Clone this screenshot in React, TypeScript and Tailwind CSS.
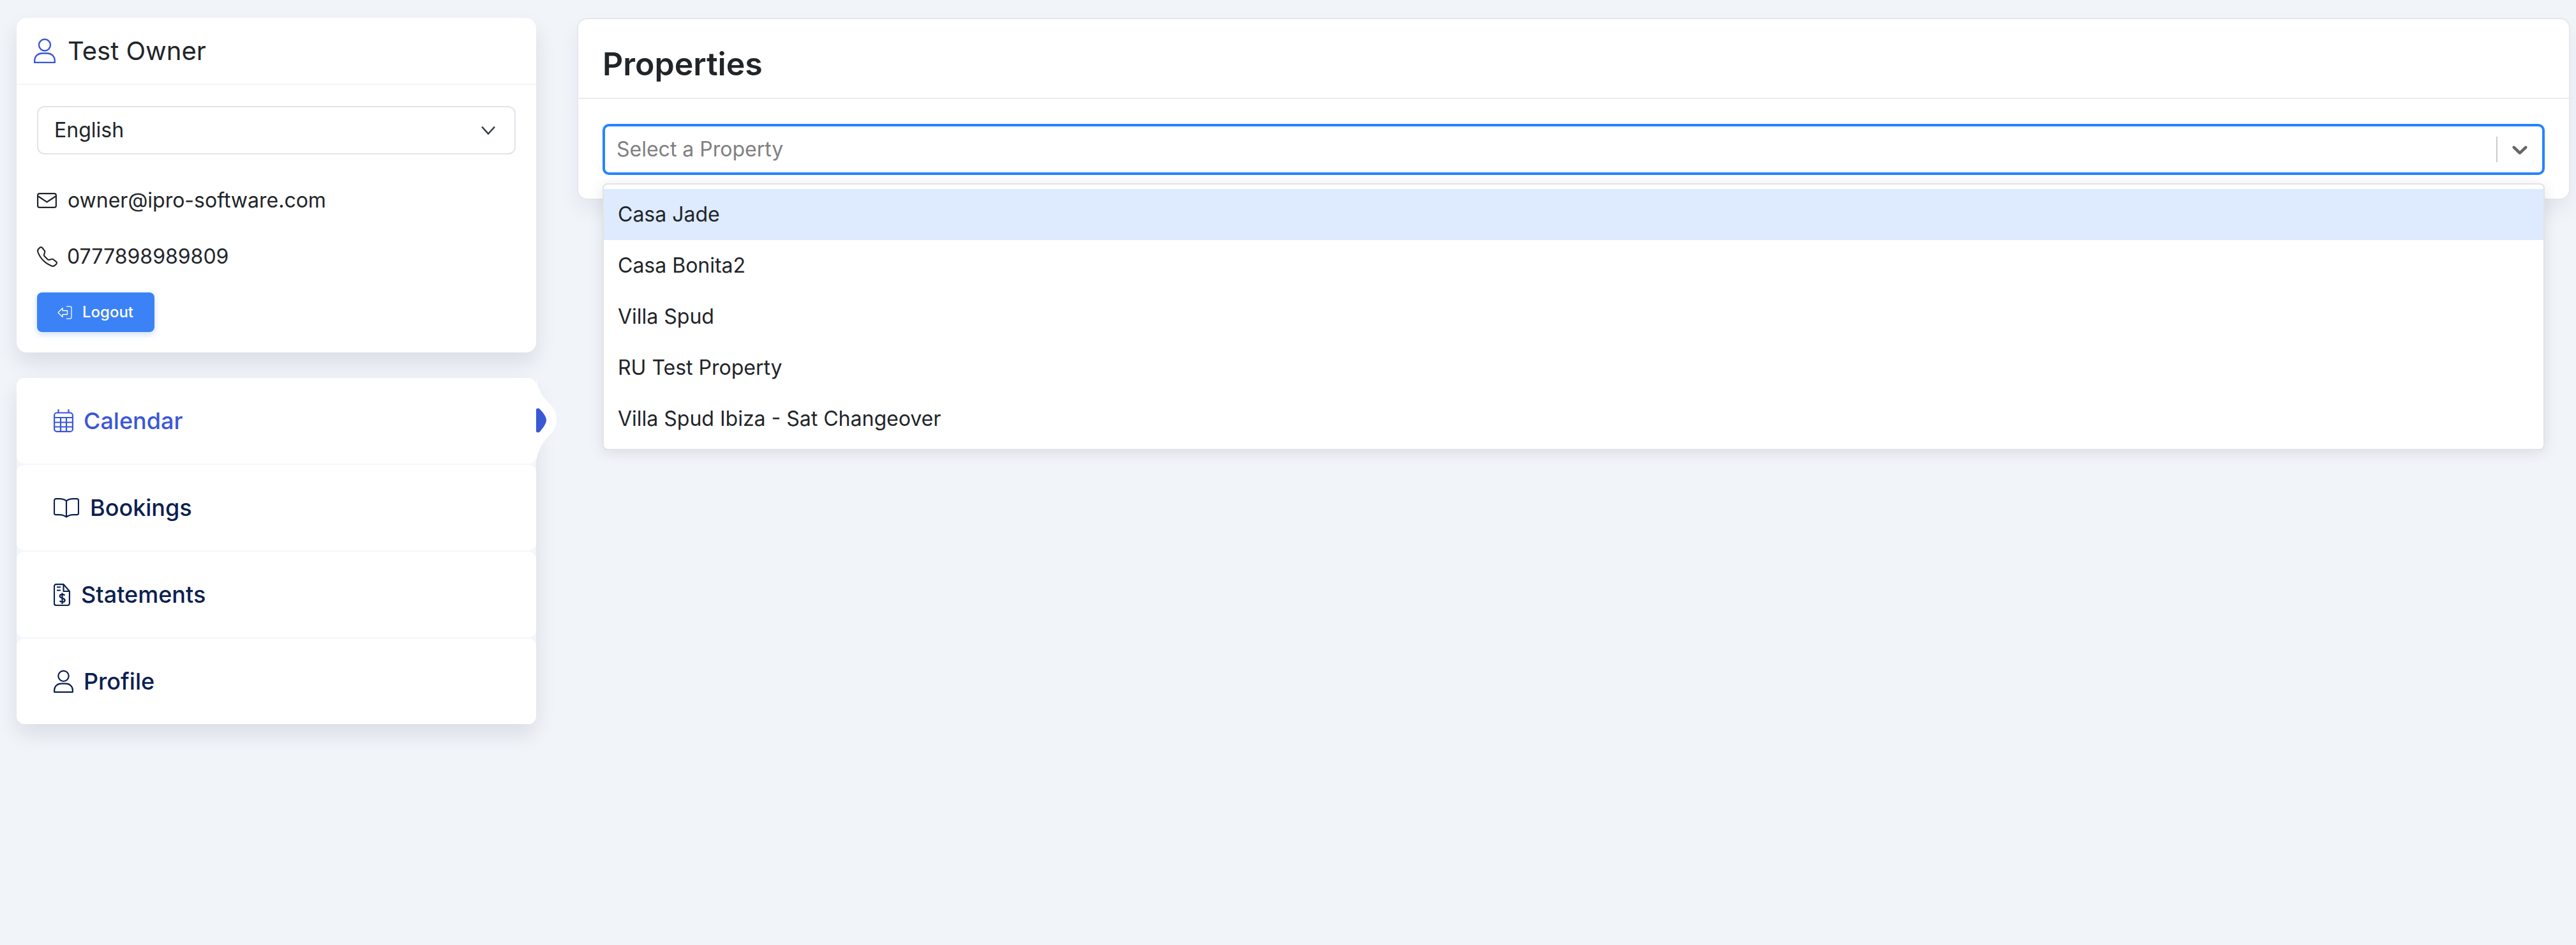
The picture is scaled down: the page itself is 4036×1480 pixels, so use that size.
import React from "react";

const properties = [
  "Casa Jade",
  "Casa Bonita2",
  "Villa Spud",
  "RU Test Property",
  "Villa Spud Ibiza - Sat Changeover",
];

const PersonIcon = ({ className }: { className: string }) => (
  <svg viewBox="0 0 34 39" fill="none" stroke="currentColor" strokeWidth="2.4" className={className}>
    <circle cx="17" cy="10.500" r="9" />
    <path d="M1.200 38v-3c0-7 5.300-11.500 12-11.500h7.600c6.700 0 12 4.500 12 11.500v3z" strokeLinejoin="round" />
  </svg>
);

const MailIcon = () => (
  <svg viewBox="0 0 31 24" fill="none" stroke="currentColor" strokeWidth="2.200" className="w-[31px] h-[24px] shrink-0">
    <rect x="1.100" y="1.100" width="28.800" height="21.800" rx="3" />
    <path d="M2 5.500l13.500 9 13.500-9" />
  </svg>
);

const PhoneIcon = () => (
  <svg viewBox="0 0 16 16" fill="currentColor" className="w-[32px] h-[32px] shrink-0">
    <path d="M3.654 1.328a.678.678 0 0 0-1.015-.063L1.605 2.3c-.483.484-.661 1.169-.45 1.77a17.568 17.568 0 0 0 4.168 6.608 17.569 17.569 0 0 0 6.608 4.168c.601.211 1.286.033 1.77-.45l1.034-1.034a.678.678 0 0 0-.063-1.015l-2.307-1.794a.678.678 0 0 0-.58-.122l-2.19.547a1.745 1.745 0 0 1-1.657-.459L5.482 8.062a1.745 1.745 0 0 1-.46-1.657l.548-2.19a.678.678 0 0 0-.122-.58L3.654 1.328zM1.884.511a1.745 1.745 0 0 1 2.612.163L6.29 2.98c.329.423.445.974.315 1.494l-.547 2.19a.678.678 0 0 0 .178.643l2.457 2.457a.678.678 0 0 0 .644.178l2.189-.547a1.745 1.745 0 0 1 1.494.315l2.306 1.794c.829.645.905 1.870.163 2.611l-1.034 1.034c-.74.74-1.846 1.065-2.877.702a18.634 18.634 0 0 1-7.010-4.420 18.634 18.634 0 0 1-4.420-7.009c-.362-1.030-.037-2.137.703-2.877L1.885.511z" />
  </svg>
);

const LogoutIcon = () => (
  <svg viewBox="0 0 23 21" fill="none" stroke="currentColor" strokeWidth="1.300" strokeLinejoin="round" className="w-[23px] h-[21px] shrink-0">
    <path d="M14 .800h5.500a2.500 2.500 0 0 1 2.500 2.500v14.400a2.500 2.500 0 0 1-2.500 2.500H14" />
    <path d="M1 10.500l7-7v4h7.500v6H8v4z" />
  </svg>
);

const CalendarIcon = () => (
  <svg viewBox="0 0 31 36" fill="none" stroke="currentColor" strokeWidth="2.200" className="w-[31px] h-[36px] shrink-0">
    <rect x="1.100" y="5.500" width="28.800" height="29.400" rx="4" />
    <path d="M7.500 0v6M23.500 0v6M1 13h29M1 20.500h29M1 27.500h29M11 13v22M20 13v22" />
  </svg>
);

const BookIcon = () => (
  <svg viewBox="0 0 40 31" fill="none" stroke="currentColor" strokeWidth="2.200" strokeLinejoin="round" className="w-[40px] h-[31px] shrink-0">
    <path d="M20 4.500C17 2 13 1.100 9 1.100H4a3 3 0 0 0-3 3v20a2 2 0 0 0 2 2h6c4.500 0 8 1.300 11 3.600 3-2.300 6.500-3.600 11-3.600h6a2 2 0 0 0 2-2v-20a3 3 0 0 0-3-3h-5c-4 0-8 .9-11 3.400zM20 4.500v25" />
  </svg>
);

const StatementIcon = () => (
  <svg viewBox="0 0 26 35" fill="none" stroke="currentColor" strokeWidth="2.200" strokeLinejoin="round" className="w-[26px] h-[35px] shrink-0">
    <path d="M4 1.100h11.500L24.900 12v19a3 3 0 0 1-3 3H4a3 3 0 0 1-3-3V4.100a3 3 0 0 1 3-3zM15.500 1.100V12h9.400M5 5.500h6M5 10.500h6" />
    <path d="M17.500 18.500c-.8-1-2.300-1.600-4-1.600-2.200 0-3.800 1.100-3.800 2.900 0 3.700 8 2.400 8 6.200 0 1.800-1.700 2.900-3.900 2.900-1.800 0-3.300-.7-4.300-1.800M13.500 14.500v17.500" />
  </svg>
);

const navItems = [
  { label: "Calendar", icon: <CalendarIcon />, gap: "gap-[16px]", active: true },
  { label: "Bookings", icon: <BookIcon />, gap: "gap-[17px]", active: false },
  { label: "Statements", icon: <StatementIcon />, gap: "gap-[17px]", active: false },
  { label: "Profile", icon: <PersonIcon className="w-[31px] h-[36px] shrink-0" />, gap: "gap-[16px]", active: false },
];

export default function App() {
  return (
    <div className="flex items-start min-h-[1480px] bg-[#f1f4f9] font-['Inter',sans-serif] pt-[28px] pl-[26px] pr-[9px] text-[#212529]">
      {/* Sidebar */}
      <div className="w-[814px] shrink-0 flex flex-col gap-[40px]">
        <div className="bg-white rounded-[16px] shadow-[0_16px_32px_rgba(18,38,63,0.1)]">
          <div className="h-[105px] flex items-center gap-[19px] pl-[27px] border-b-2 border-[#f3f4f6]">
            <PersonIcon className="w-[34px] h-[39px] shrink-0 text-[#3a57d6]" />
            <span className="text-[40px] leading-[48px]">Test Owner</span>
          </div>
          <div className="px-[32px] pt-[33px] pb-[32px]">
            <div className="h-[76px] flex items-center justify-between pl-[25px] pr-[29px] border-2 border-[#e2e4ea] rounded-[12px] text-[32px]">
              English
              <svg viewBox="0 0 24 14" fill="none" stroke="#343a40" strokeWidth="2.500" className="w-[24px] h-[14px]">
                <path d="M2 1.500l10 11 10-11" />
              </svg>
            </div>
            <div className="flex items-center gap-[17px] mt-[52px] h-[40px] text-[32px]">
              <MailIcon />
              owner@ipro-software.com
            </div>
            <div className="flex items-center gap-[15px] mt-[48px] h-[40px] text-[32px]">
              <PhoneIcon />
              0777898989809
            </div>
            <button className="flex items-center gap-[16px] w-[184px] h-[62px] mt-[36px] pl-[32px] bg-[#3b82f6] text-white text-[24px] font-medium rounded-[8px] shadow-[0_4px_10px_rgba(59,130,246,0.25)]">
              <LogoutIcon />
              Logout
            </button>
          </div>
        </div>

        <div className="flex flex-col gap-[2px] rounded-[16px] bg-[#f3f6fa] shadow-[0_16px_32px_rgba(18,38,63,0.1)]">
          {navItems.map((item) => (
            <div
              key={item.label}
              className={`relative h-[134px] flex items-center ${item.gap} pl-[58px] bg-white rounded-[12px] text-[36px] font-medium ${
                item.active ? "text-[#3a57d6]" : "text-[#0b2050]"
              }`}
            >
              {item.icon}
              {item.label}
              {item.active && (
                <svg viewBox="0 0 32 134" className="absolute left-full top-0 w-[32px] h-[134px]">
                  <path d="M0 1c4 22 12 30 20 38 7 7 12 14 12 26s-5 19-12 26C12 99 4 109 0 131z" fill="#ffffff" />
                  <path d="M0 30c0-3 4-3 6-1 5 5 10 12 10 17 0 5-5 12-10 18-2 2-6 2-6-1z" fill="#3a57d6" transform="translate(0 20)" />
                </svg>
              )}
            </div>
          ))}
        </div>
      </div>

      {/* Main panel */}
      <div className="relative ml-[64px] flex-1 h-[285px] bg-white border-2 border-[#e5e7eb] rounded-[16px] shadow-[0_16px_32px_rgba(18,38,63,0.06)]">
        <div className="h-[125px] flex items-center pt-[18px] pl-[38px] -mx-[6px] border-b-2 border-[#e9ecef]">
          <h1 className="pl-[6px] text-[50px] font-semibold">Properties</h1>
        </div>
        <div className="absolute left-[38px] right-[38px] top-[164px] z-10">
          <div className="h-[80px] flex items-center bg-white border-4 border-[#2684ff] rounded-[10px] pl-[18px]">
            <span className="flex-1 text-[32px] text-[#808080]">Select a Property</span>
            <span className="w-[2px] h-[40px] bg-[#cccccc]" />
            <span className="w-[70px] flex justify-center">
              <svg viewBox="0 0 20 20" fill="#666666" className="w-[40px] h-[40px]">
                <path d="M4.516 7.548c0.436-0.446 1.043-0.481 1.576 0l3.908 3.747 3.908-3.747c0.533-0.481 1.141-0.446 1.574 0 0.436 0.445 0.408 1.197 0 1.615-0.406 0.418-4.695 4.502-4.695 4.502-0.217 0.223-0.502 0.335-0.787 0.335s-0.57-0.112-0.789-0.335c0 0-4.287-4.084-4.695-4.502s-0.436-1.17 0-1.615z" />
              </svg>
            </span>
          </div>
          <div className="mt-[13px] bg-white border-2 border-[#e3e3e3] rounded-[8px] py-[7px] shadow-[0_4px_22px_rgba(0,0,0,0.1)]">
            {properties.map((name, i) => (
              <div
                key={name}
                className={`h-[80px] flex items-center pl-[22px] text-[32px] ${i === 0 ? "bg-[#deebff]" : ""}`}
              >
                {name}
              </div>
            ))}
          </div>
        </div>
      </div>
    </div>
  );
}
